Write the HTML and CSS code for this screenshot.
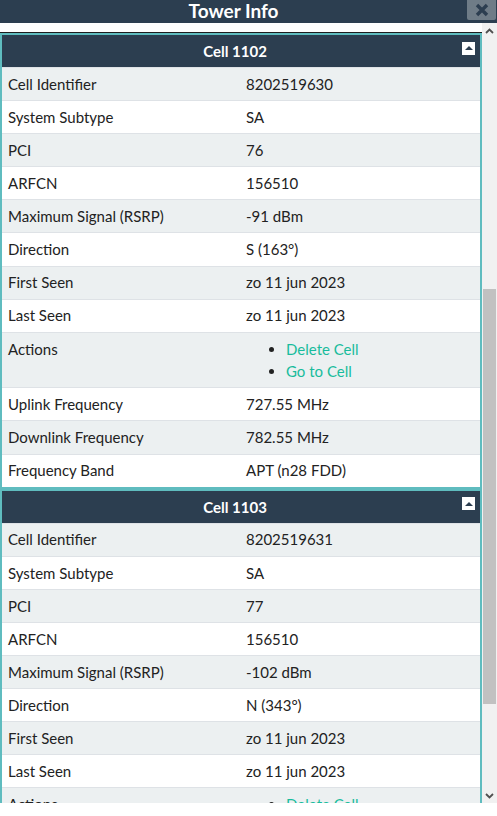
FILE: index.html
```html
<!DOCTYPE html>
<html>
<head>
<meta charset="utf-8">
<title>Tower Info</title>
<link rel="stylesheet" href="styles.css">
</head>
<body>
<div class="window">
  <div class="titlebar">
    <div class="title">Tower Info</div>
    <div class="close">
      <svg width="16" height="14" viewBox="0 0 16 14"><path d="M3 2 L13 12 M13 2 L3 12" stroke="#2c3e50" stroke-width="3.4" stroke-linecap="butt"/></svg>
    </div>
  </div>
  <div class="frame">
    <div class="content">
      <div class="strip"></div>

      <div class="panel">
        <div class="panel-head">
          <div class="panel-title">Cell 1102</div>
          <div class="toggle"><span class="tri"></span></div>
        </div>
        <div class="row odd"><div class="k">Cell Identifier</div><div class="v">8202519630</div></div>
        <div class="row"><div class="k">System Subtype</div><div class="v">SA</div></div>
        <div class="row odd"><div class="k">PCI</div><div class="v">76</div></div>
        <div class="row"><div class="k">ARFCN</div><div class="v">156510</div></div>
        <div class="row odd"><div class="k">Maximum Signal (RSRP)</div><div class="v">-91 dBm</div></div>
        <div class="row"><div class="k">Direction</div><div class="v">S (163°)</div></div>
        <div class="row odd"><div class="k">First Seen</div><div class="v">zo 11 jun 2023</div></div>
        <div class="row"><div class="k">Last Seen</div><div class="v">zo 11 jun 2023</div></div>
        <div class="row odd"><div class="k">Actions</div><div class="v"><ul class="actions"><li><a href="#">Delete Cell</a></li><li><a href="#">Go to Cell</a></li></ul></div></div>
        <div class="row"><div class="k">Uplink Frequency</div><div class="v">727.55 MHz</div></div>
        <div class="row odd"><div class="k">Downlink Frequency</div><div class="v">782.55 MHz</div></div>
        <div class="row"><div class="k">Frequency Band</div><div class="v">APT (n28 FDD)</div></div>
      </div>

      <div class="panel">
        <div class="panel-head">
          <div class="panel-title">Cell 1103</div>
          <div class="toggle"><span class="tri"></span></div>
        </div>
        <div class="row odd"><div class="k">Cell Identifier</div><div class="v">8202519631</div></div>
        <div class="row"><div class="k">System Subtype</div><div class="v">SA</div></div>
        <div class="row odd"><div class="k">PCI</div><div class="v">77</div></div>
        <div class="row"><div class="k">ARFCN</div><div class="v">156510</div></div>
        <div class="row odd"><div class="k">Maximum Signal (RSRP)</div><div class="v">-102 dBm</div></div>
        <div class="row"><div class="k">Direction</div><div class="v">N (343°)</div></div>
        <div class="row odd"><div class="k">First Seen</div><div class="v">zo 11 jun 2023</div></div>
        <div class="row"><div class="k">Last Seen</div><div class="v">zo 11 jun 2023</div></div>
        <div class="row odd"><div class="k">Actions</div><div class="v"><ul class="actions"><li><a href="#">Delete Cell</a></li><li><a href="#">Go to Cell</a></li></ul></div></div>
      </div>
    </div>
    <div class="scrollbar">
      <div class="arrow">
        <svg width="9" height="6" viewBox="0 0 9 6"><path d="M1 5 L4.5 1.5 L8 5" fill="none" stroke="#505050" stroke-width="1.8"/></svg>
      </div>
      <div class="track"><div class="thumb"></div></div>
      <div class="arrow">
        <svg width="9" height="6" viewBox="0 0 9 6"><path d="M1 1 L4.5 4.5 L8 1" fill="none" stroke="#505050" stroke-width="1.8"/></svg>
      </div>
    </div>
  </div>
</div>
</body>
</html>
```

FILE: styles.css
```css
html, body {
  margin: 0;
  padding: 0;
  background: #ffffff;
}
body {
  font-family: Lato, "Open Sans", sans-serif;
  color: #222222;
  font-size: 15px;
}
.window {
  width: 497px;
  height: 816px;
  display: flex;
  flex-direction: column;
}
.titlebar {
  height: 23px;
  background: #2c3e50;
  display: flex;
  align-items: flex-start;
}
.title {
  flex: 1;
  text-align: center;
  color: #ffffff;
  font-weight: 700;
  font-size: 19px;
  line-height: 22px;
}
.close {
  width: 29px;
  height: 20px;
  margin-right: 1px;
  background: #6f7c87;
  border-radius: 0 0 2px 2px;
  display: flex;
  align-items: center;
  justify-content: center;
}
.frame {
  height: 780px;
  display: flex;
}
.content {
  flex: 1;
  overflow: hidden;
  background: #ffffff;
}
.strip {
  height: 9px;
  border-bottom: 1px solid #1e1e1e;
  background: #ffffff;
}
.panel {
  border: 2px solid #5fbcbf;
}
.panel-head {
  height: 32px;
  background: #2c3e50;
  display: flex;
  align-items: center;
  padding-right: 5px;
}
.panel-title {
  flex: 1;
  text-align: center;
  padding-left: 6px;
  color: #ffffff;
  font-weight: 700;
  font-size: 15px;
}
.toggle {
  width: 13px;
  height: 13px;
  background: #ffffff;
  display: flex;
  align-items: center;
  justify-content: center;
  margin-top: -6px;
}
.tri {
  width: 0;
  height: 0;
  border-left: 4px solid transparent;
  border-right: 4px solid transparent;
  border-bottom: 4px solid #2c3e50;
}
.row {
  display: grid;
  grid-template-columns: 238px 1fr;
  border-top: 1px solid #dee2e6;
  background: #ffffff;
  line-height: 22.5px;
}
.row.odd {
  background: #ecf0f1;
}
.k, .v {
  padding: 4.8px 6px 4.8px 6px;
}
.actions {
  margin: 0;
  padding-left: 40px;
  list-style: disc;
}
.actions a {
  color: #18bc9c;
  text-decoration: none;
}
.scrollbar {
  width: 15px;
  background: #f1f1f1;
  display: flex;
  flex-direction: column;
}
.arrow {
  height: 15px;
  display: flex;
  align-items: center;
  justify-content: center;
}
.track {
  flex: 1;
  display: flex;
  flex-direction: column;
}
.thumb {
  margin-top: 251px;
  height: 415px;
  margin-left: 1px;
  margin-right: 1px;
  background: #c1c1c1;
}
```
